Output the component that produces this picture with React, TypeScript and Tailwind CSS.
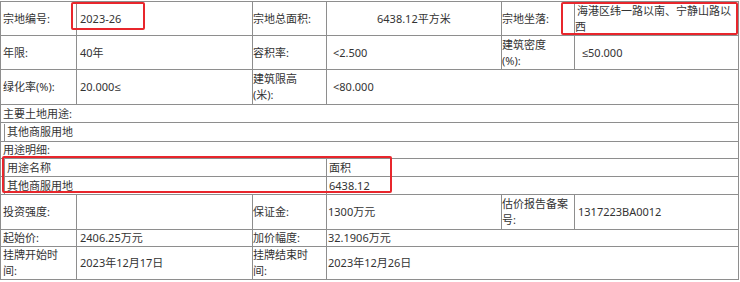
const line = "border border-[#8e8e8e] p-0 align-middle";

function Nested({ children }: { children: React.ReactNode }) {
  return (
    <div className="ml-[3px] flex h-[17px] items-center border-l border-[#8e8e8e] pl-[2px]">
      {children}
    </div>
  );
}

function Le() {
  return <span className="font-['Liberation_Sans',sans-serif]">≤</span>;
}

export default function App() {
  return (
    <div className="relative h-[282px] w-[740px] bg-white pt-px font-['Noto_Sans','Noto_Sans_CJK_SC',sans-serif] text-[11px] leading-[16px] text-[#333]">
      <table className="w-[738px] table-fixed border-collapse">
        <colgroup>
          <col className="w-[76px]" />
          <col className="w-[176px]" />
          <col className="w-[74px]" />
          <col className="w-[175px]" />
          <col className="w-[73px]" />
          <col className="w-[164px]" />
        </colgroup>
        <tbody>
          <tr className="h-[34px]">
            <td className={`${line} pl-[2px]`}>宗地编号:</td>
            <td className={`${line} pl-[3px]`}>2023-26</td>
            <td className={line}>宗地总面积:</td>
            <td className={`${line} pl-[50px]`}>6438.12平方米</td>
            <td className={line}>宗地坐落:</td>
            <td className={`${line} whitespace-nowrap indent-[2px]`}>
              海港区纬一路以南、宁静山路以
              <br />
              西
            </td>
          </tr>
          <tr className="h-[34px]">
            <td className={`${line} pl-[2px]`}>年限:</td>
            <td className={`${line} pl-[3px]`}>40年</td>
            <td className={line}>容积率:</td>
            <td className={`${line} pl-[6px]`}>&lt;2.500</td>
            <td className={line}>
              建筑密度
              <br />
              (%):
            </td>
            <td className={`${line} pl-[7px]`}>
              <Le />
              50.000
            </td>
          </tr>
          <tr className="h-[35px]">
            <td className={`${line} pl-[2px]`}>绿化率(%):</td>
            <td className={`${line} pl-[3px]`}>
              20.000
              <Le />
            </td>
            <td className={line}>
              建筑限高
              <br />
              (米):
            </td>
            <td className={`${line} pl-[6px]`} colSpan={3}>
              &lt;80.000
            </td>
          </tr>
          <tr className="h-[18px]">
            <td className={`${line} pl-[2px]`} colSpan={6}>
              主要土地用途:
            </td>
          </tr>
          <tr className="h-[19px]">
            <td className={line} colSpan={6}>
              <Nested>其他商服用地</Nested>
            </td>
          </tr>
          <tr className="h-[16px]">
            <td className={`${line} pl-[2px]`} colSpan={6}>
              用途明细:
            </td>
          </tr>
          <tr className="h-[18px]">
            <td className={line} colSpan={3}>
              <Nested>用途名称</Nested>
            </td>
            <td className={`${line} pl-[2px]`} colSpan={3}>
              面积
            </td>
          </tr>
          <tr className="h-[18px]">
            <td className={line} colSpan={3}>
              <Nested>其他商服用地</Nested>
            </td>
            <td className={`${line} pl-[2px]`} colSpan={3}>
              6438.12
            </td>
          </tr>
          <tr className="h-[35px]">
            <td className={`${line} pl-[2px]`}>投资强度:</td>
            <td className={line}></td>
            <td className={line}>保证金:</td>
            <td className={`${line} pl-[1px]`}>1300万元</td>
            <td className={line}>
              估价报告备案
              <br />
              号:
            </td>
            <td className={`${line} pl-[3px]`}>1317223BA0012</td>
          </tr>
          <tr className="h-[17px]">
            <td className={`${line} pl-[2px]`}>起始价:</td>
            <td className={`${line} pl-[3px]`}>2406.25万元</td>
            <td className={line}>加价幅度:</td>
            <td className={`${line} pl-[1px]`} colSpan={3}>
              32.1906万元
            </td>
          </tr>
          <tr className="h-[33px]">
            <td className={`${line} pl-[2px]`}>
              挂牌开始时
              <br />
              间:
            </td>
            <td className={`${line} pl-[3px]`}>2023年12月17日</td>
            <td className={line}>
              挂牌结束时
              <br />
              间:
            </td>
            <td className={`${line} pl-[1px]`} colSpan={3}>
              2023年12月26日
            </td>
          </tr>
        </tbody>
      </table>

      {/* red annotation boxes */}
      <div className="absolute left-[71px] top-[2px] h-[28px] w-[74px] rounded-[2px] border-2 border-[#e8262c]" />
      <div className="absolute left-[561px] top-[2px] h-[33px] w-[177px] rounded-[2px] border-2 border-[#e8262c]" />
      <div className="absolute left-[2px] top-[156px] h-[37px] w-[390px] rounded-[2px] border-2 border-[#e8262c]" />
    </div>
  );
}
